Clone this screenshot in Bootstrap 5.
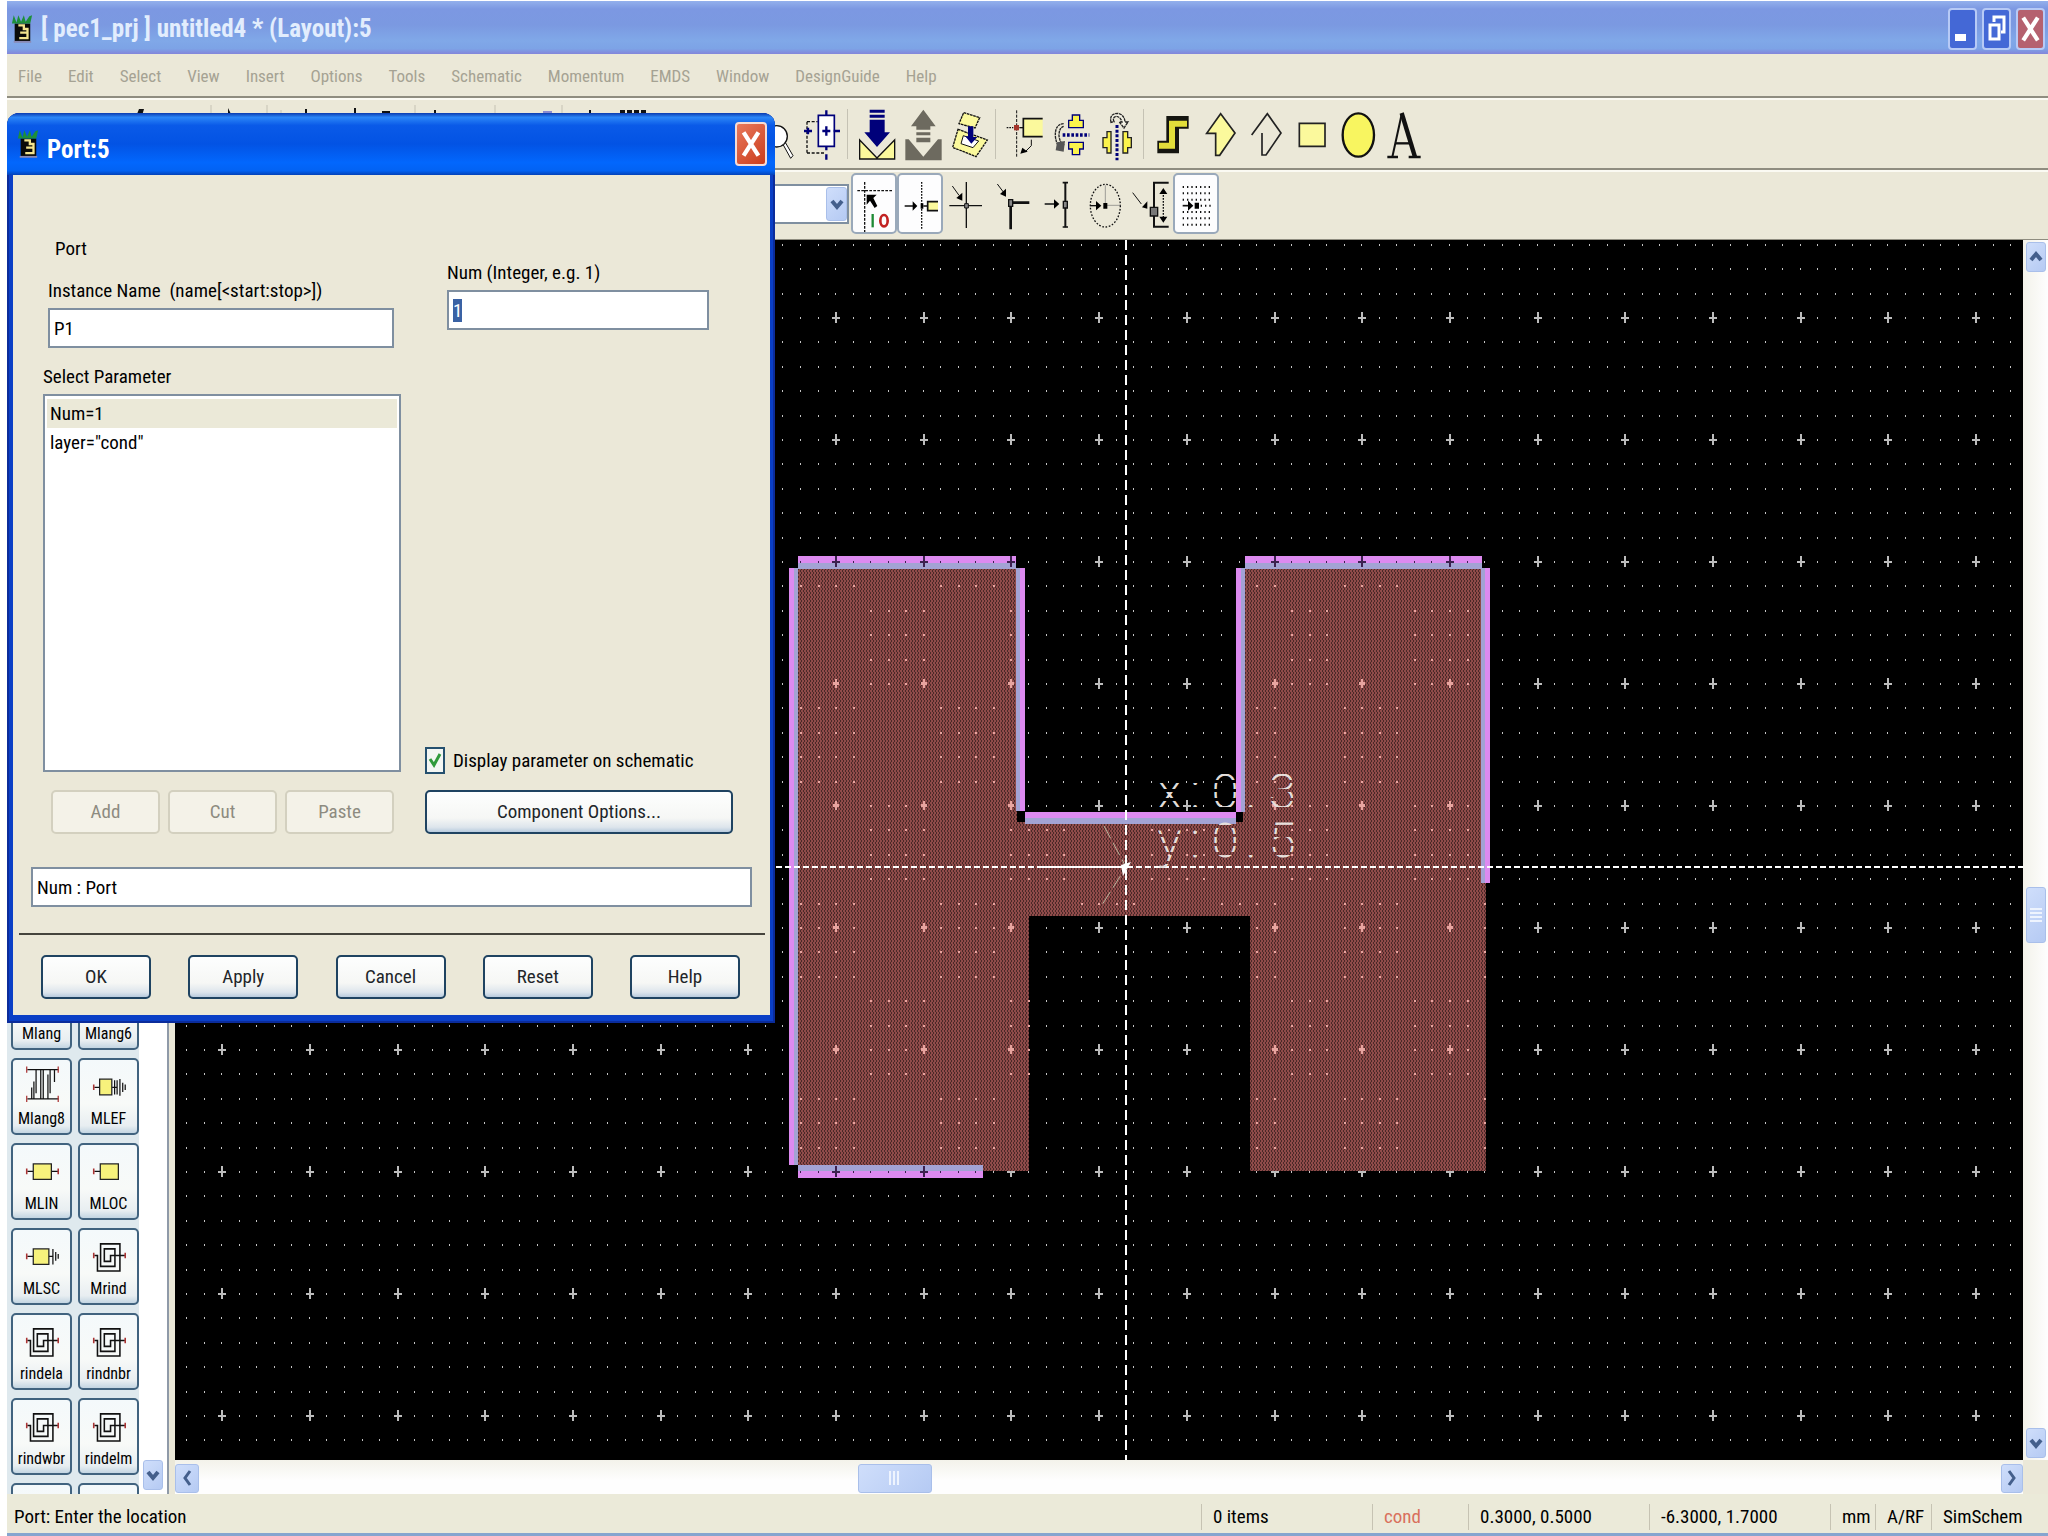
<!DOCTYPE html>
<html lang="en">
<head>
<meta charset="utf-8">
<meta name="viewport" content="width=device-width, initial-scale=1">
<title>[ pec1_prj ] untitled4 * (Layout):5</title>
<link href="https://cdn.jsdelivr.net/npm/bootstrap@5.3.0/dist/css/bootstrap.min.css" rel="stylesheet">
<style>
  :root { --face: #ebe8d8; --line: #8f8d80; --ink: #000; --field: #7f8fa0; }
  body { font-family: "Roboto Condensed", Roboto, "Liberation Sans", sans-serif; font-size: 19px; line-height: 26px; color: var(--ink); background: #fff; }
  .app-window { padding: 1px 0 0 7px; }
  .btn { --bs-btn-font-size: 19px; --bs-btn-line-height: 26px; --bs-btn-padding-x: 0; --bs-btn-padding-y: 0; }
  .app-title { height: 53px; padding: 2px 3px 0 4px; background: linear-gradient(#93b0ec 0, #7c98e2 15%, #7b99e1 45%, #80a8e8 75%, #7da3e6 90%, #8385da 100%); color: #e2edfd; font-size: 25px; font-weight: 700; }
  .win-btn { width: 29px; height: 42px; border: 2px solid #b7caf6; border-radius: 4px; background: #4468d6; }
  .win-btn.shut { background: #b5616f; }
  .menu-strip { height: 44px; padding: 2px 11px 0; gap: 26px; background: var(--face); border-bottom: 2px solid var(--line); font-size: 17px; }
  .menu-strip a { color: #a5a293; text-decoration: none; }
  .tool-strip { background: var(--face); border-top: 2px solid #fbfaf3; }
  .strip-a { height: 72px; border-bottom: 2px solid var(--line); }
  .strip-b { height: 70px; border-bottom: 1px solid var(--line); padding: 0 0 4px 642px; }
  .tool { border: 0; border-radius: 5px; width: 46px; flex: none; }
  .strip-b .tool { height: 61px; }
  .tool.on { background: #fdfdfe; border: 2px solid #9aa9ba; }
  .tool svg { display: block; width: 100%; height: 100%; }
  .tool-sep { width: 1px; height: 50px; margin: 0 5px 0 4px; background: #c5c2b4; }
  .layer-box { width: 200px; height: 40px; margin-right: 2px; background: #fff; border: 2px solid var(--field); }
  .layer-box select { appearance: none; border: 0; background: #fff; min-width: 0; }
  .nub { background: linear-gradient(135deg, #cfdefb, #b5caf3); border: 1px solid #a9bfea; border-radius: 3px; padding: 0; display: flex; align-items: center; justify-content: center; flex: none; }
  .work { background: var(--face); }
  .palette-pane { width: 162px; background: #dfe9ee; border-right: 2px solid #8f9aa8; overflow: hidden; }
  .palette-grid { width: 132px; padding: 733px 0 0 4px; display: grid; grid-template-columns: 61px 61px; grid-auto-rows: 77px; gap: 8px 6px; flex: none; }
  .part { border: 2px solid #41637f; border-radius: 5px; background: linear-gradient(#f4f9fb, #f8faf8 60%, #e8eef1 90%, #c3d5e2); font-size: 16px; line-height: 20px; padding: 0; display: flex; flex-direction: column; align-items: center; overflow: hidden; }
  .part svg { width: 58px; height: 49px; flex: none; }
  .canvas-pane { margin-left: 6px; }
  .cad { background: #000; overflow: hidden; }
  .cad svg { display: block; width: 100%; height: 100%; }
  .v-bar { width: 25px; background: linear-gradient(90deg, #f3f2ea, #fefefe); padding: 2px; }
  .h-bar { height: 34px; background: linear-gradient(#f3f2ea, #fefefe 60%); padding: 3px 0 1px; }
  .status-strip { height: 42px; background: #ebead9; border-bottom: 3px solid #86a5cf; padding: 6px 0 0 7px; }
  .status-cell { border-left: 1px solid #c6c3b3; padding-left: 11px; white-space: nowrap; }
  /* dialog */
  .port-dialog { position: absolute; left: 7px; top: 113px; width: 768px; height: 910px; background: #0a3fc6; padding: 0 5px 8px 6px; border-radius: 12px 12px 0 0; box-shadow: inset 0 0 0 2px #0b2c9b; }
  .dialog-title { height: 62px; margin: 0 -5px 0 -6px; padding: 0 8px 0 10px; border-radius: 12px 12px 0 0; background: linear-gradient(#0a3bb0 0, #2b86f7 7%, #0a5ae8 20%, #0353e4 50%, #0267fd 80%, #0262f3 93%, #0442b8 100%); color: #fff; font-size: 25px; font-weight: 700; }
  .shut-red { width: 32px; height: 44px; border: 2px solid #f6dcd5; border-radius: 4px; background: linear-gradient(135deg, #e8795c, #cb3c1c); }
  .dialog-body { background: var(--face); padding: 61px 0 0; }
  .box { border: 2px solid var(--field); border-radius: 0; background: #fff; color: #000; font-size: 19px; line-height: 26px; padding: 0 4px; height: 40px; }
  .box:focus { box-shadow: none; border-color: var(--field); background: #fff; color: #000; }
  .box::selection { background: #3a62a4; color: #fff; }
  .param-list { height: 378px; border: 2px solid var(--field); background: #fff; padding: 3px 2px; border-radius: 0; }
  .param-list .list-group-item { border: 0; padding: 0 3px; line-height: 29px; color: #000; background: #fff; text-align: left; }
  .param-list .list-group-item.active { background: #ebe9d8; }
  .xp { border: 2px solid #1f4361; border-radius: 5px; background: linear-gradient(#fdfefe, #f6f7f5 65%, #dde5ec 88%, #b8cbde); height: 44px; }
  .xp:disabled { border-color: #d3d0bf; background: #f4f2e8; color: #8d8b80; opacity: 1; }
  .left-col { width: 358px; margin-left: 30px; }
  .right-col { width: 308px; margin-left: 24px; }
  .inst-field { margin-left: 5px; }
  .num-field { margin-left: 22px; }
  .small-row { margin-top: 18px; }
  .small-row .xp { width: 109px; }
  .foot-row .xp { width: 110px; }
  .tick { width: 20px; height: 27px; margin: 0; border: 2px solid #25506f; border-radius: 0 !important; background-color: #f3f6f3; background-size: 100% 100%; box-shadow: none; }
  .tick:checked { background-color: #f3f6f3; border-color: #25506f; background-image: url("data:image/svg+xml,%3Csvg xmlns='http://www.w3.org/2000/svg' viewBox='0 0 16 23' preserveAspectRatio='none'%3E%3Cpath d='M3 10l4 6 6-11' fill='none' stroke='%232f9a3c' stroke-width='3'/%3E%3C/svg%3E"); }
  .rule { height: 2px; background: #45443d; margin: 26px 5px 0 6px; }
  .xy { font-family: Roboto, sans-serif; font-weight: 100; font-size: 48px; fill: url(#dash); stroke: url(#dash); stroke-width: 1; }
</style>
</head>
<body>
<svg class="d-none">
  <symbol id="app-mark" viewBox="0 0 24 32"><path d="M4 10h17v20H4z" fill="#0a0a08"/><path d="M1 10L3 1l3 8 2-8 3 7 3-7 2 7 4-6 3-1-2 9z" fill="#1d8f3a"/><path d="M8 12h6v4h4v4h-6M10 20h8v6H9" fill="none" stroke="#f3e58e" stroke-width="2.500"/><path d="M3 30h19" stroke="#8a8ab5" stroke-width="2"/></symbol>
  <symbol id="cross-mark" viewBox="0 0 24 34"><path d="M5 6l14 22M19 6L5 28" stroke="#fff" stroke-width="4"/></symbol>
  <symbol id="chev-down" viewBox="0 0 16 20"><path d="M3 7l5 6 5-6" fill="none" stroke="#445f8c" stroke-width="4"/></symbol>
  <symbol id="chev-up" viewBox="0 0 16 20"><path d="M3 13l5-6 5 6" fill="none" stroke="#445f8c" stroke-width="4"/></symbol>
  <symbol id="chev-left" viewBox="0 0 16 20"><path d="M11 3l-5 7 5 7" fill="none" stroke="#445f8c" stroke-width="3"/></symbol>
  <symbol id="chev-right" viewBox="0 0 16 20"><path d="M5 3l5 7-5 7" fill="none" stroke="#445f8c" stroke-width="3"/></symbol>
  <symbol id="p-lange" viewBox="32 150 186 144"><path d="M78 174h100M78 268h100M92 268v-36M99 268v-56M106 174v76M121 174v94M129 268v-94M144 190v78M151 174v76M165 174v40" fill="none" stroke="#111" stroke-width="4"/><path d="M76 164v20M76 258v20M177 164v20M177 258v20" stroke="#a33" stroke-width="4"/></symbol>
  <symbol id="p-mlef" viewBox="32 150 186 144"><path d="M78 231h18M135 231h14M143 208v46M151 208v46M160 204v54M169 216v30M177 222v18" stroke="#111" stroke-width="4"/><path d="M95 205h39v50H95z" fill="#f7f27c" stroke="#222" stroke-width="4"/><path d="M76 222v18" stroke="#a33" stroke-width="5"/></symbol>
  <symbol id="p-mlin" viewBox="32 150 186 144"><path d="M78 228h20M155 228h22" stroke="#111" stroke-width="4"/><path d="M97 204h58v50H97z" fill="#f7f27c" stroke="#222" stroke-width="4"/><path d="M76 219v18M177 219v18" stroke="#a33" stroke-width="5"/></symbol>
  <symbol id="p-mloc" viewBox="32 150 186 144"><path d="M78 228h20" stroke="#111" stroke-width="4"/><path d="M97 204h58v50H97z" fill="#f7f27c" stroke="#222" stroke-width="4"/><path d="M76 219v18" stroke="#a33" stroke-width="5"/></symbol>
  <symbol id="p-mlsc" viewBox="32 150 186 144"><path d="M78 228h20M145 228h15M160 204v50M169 214v28M177 220v16" stroke="#111" stroke-width="4"/><path d="M97 204h50v50H97z" fill="#f7f27c" stroke="#222" stroke-width="4"/><path d="M76 219v18" stroke="#a33" stroke-width="5"/></symbol>
  <symbol id="p-spiral" viewBox="32 150 186 144"><path d="M78 225h10v50h72v-87H98v72h46v-56h-34v40h20v-19h46" fill="none" stroke="#111" stroke-width="5"/><path d="M76 216v18M177 216v18" stroke="#a33" stroke-width="5"/></symbol>
</svg>

<div class="app-window vh-100 d-flex flex-column position-relative overflow-hidden">
  <header class="app-title d-flex align-items-center gap-2 flex-shrink-0">
    <svg width="22" height="30"><use href="#app-mark"/></svg>
    <span class="flex-grow-1">[ pec1_prj ] untitled4 * (Layout):5</span>
    <span class="d-flex" style="gap:5px">
      <button class="win-btn p-0 d-flex" aria-label="Minimize"><svg viewBox="0 0 25 38"><path d="M5 24h11v7H5z" fill="#fff"/></svg></button>
      <button class="win-btn p-0 d-flex" aria-label="Restore"><svg viewBox="0 0 25 38"><path d="M6 15h9v14H6z M10 12V7h10v15h-3" fill="none" stroke="#fff" stroke-width="3"/></svg></button>
      <button class="win-btn shut p-0 d-flex" aria-label="Close"><svg width="25" height="38"><use href="#cross-mark"/></svg></button>
    </span>
  </header>

  <nav class="menu-strip d-flex align-items-center flex-shrink-0">
    <a href="#">File</a><a href="#">Edit</a><a href="#">Select</a><a href="#">View</a><a href="#">Insert</a><a href="#">Options</a><a href="#">Tools</a><a href="#">Schematic</a><a href="#">Momentum</a><a href="#">EMDS</a><a href="#">Window</a><a href="#">DesignGuide</a><a href="#">Help</a>
  </nav>

  <div class="tool-strip strip-a d-flex align-items-center flex-shrink-0">
    <svg class="flex-shrink-0" width="744" height="68" viewBox="7 100 744 68"><path d="M139 109h5l-3 10h-6zM228 108l7 14h-7zM305 109h2v9h-2zM354 108h2v9h-2zM382 111h8v8h-8zM434 110h2v9h-2zM589 110h2v9h-2zM620 110h5v6h-5zM627 110h5v6h-5zM634 110h5v6h-5zM641 110h5v6h-5z" fill="#111"/><path d="M543 111h9v6h-9z" fill="#8b8bd0"/><path d="M211 105v50M267 105v50M281 110v40M415 105v50M495 105v50M562 105v50" stroke="#c5c2b4"/></svg>
    <button class="btn tool" aria-label="Zoom"><svg viewBox="-57 -3 138 207"><circle cx="20" cy="106" r="32" fill="#fff" stroke="#111" stroke-width="4"/><path d="M40 132l22 40 7-8-22-38z" fill="#fff" stroke="#111" stroke-width="3"/></svg></button>
    <button class="btn tool" aria-label="Zoom area"><svg viewBox="82 -3 138 207"><path d="M112 62h32M112 62v96M112 156h56" fill="none" stroke="#111" stroke-width="4" stroke-dasharray="9 5"/><path d="M146 43h48v93h-48z" fill="#fff" stroke="#00007a" stroke-width="5"/><path d="M103 90h24M192 90h19M158 90h24M170 76v28M170 28v14M170 136v12M170 160v16M115 80v20" stroke="#00007a" stroke-width="7"/></svg></button>
    <span class="tool-sep"></span>
    <button class="btn tool" aria-label="Push"><svg viewBox="249 -3 138 207"><path d="M269 117l52 54 53-54v57H269z" fill="#fbf99c" stroke="#111" stroke-width="4"/><path d="M299 26h45v9h-45zM299 41h45v9h-45zM299 56h45v38h16l-39 44-38-44h16z" fill="#00007a"/></svg></button>
    <button class="btn tool" aria-label="Pop"><svg viewBox="388 -3 138 207"><path d="M407 115h10l44 52 44-52h11v63H407zM461 26l37 50h-16v10h-42V76h-16zM440 94h42v9h-42zM440 110h42v14h-42z" fill="#6d6a5f"/></svg></button>
    <button class="btn tool" aria-label="Move layer"><svg viewBox="527 -3 138 207"><path d="M583 35l48 15-14 31-48-13zM566 85l88 32-34 50-70-28z" fill="#fbf99c" stroke="#111" stroke-width="4" stroke-dasharray="8 2"/><path d="M582 104l46 16-17 20-36-12z" fill="#fff" stroke="#111" stroke-width="3"/><path d="M596 76h16v32h12l-18 20-18-22h8z" fill="#00007a"/></svg></button>
    <span class="tool-sep"></span>
    <button class="btn tool" aria-label="Snap pin"><svg viewBox="695 -3 138 207"><path d="M742 28v142" stroke="#111" stroke-width="3" stroke-dasharray="9 4"/><path d="M712 80h20" stroke="#111" stroke-width="4" stroke-dasharray="5 3"/><path d="M820 53h-58v54h58" fill="#fbf99c" stroke="#111" stroke-width="5"/><path d="M750 80h12" stroke="#111" stroke-width="4"/><path d="M734 72h15v16h-15z" fill="#a5352b"/><path d="M786 116v18l-18 18" fill="none" stroke="#111" stroke-width="3"/><path d="M753 158l6-18 16 12z"/></svg></button>
    <button class="btn tool" aria-label="Mirror vertically"><svg viewBox="834 -3 138 207"><path d="M881 102h80" stroke="#00007a" stroke-width="11" stroke-dasharray="8 5"/><path d="M910 42h22v16h11v22h-44V58h11zM899 124h44v20h-11v17h-22v-17h-11z" fill="#fbf34c" stroke="#00007a" stroke-width="4"/><path d="M884 68q-26 2-25 36 2 30 22 44M884 76q-14 4-14 28 2 22 16 28" fill="none" stroke="#222" stroke-width="4" stroke-dasharray="8 2"/><path d="M864 124l24-4-4 32-24-4z" fill="#555"/></svg></button>
    <button class="btn tool" aria-label="Mirror horizontally"><svg viewBox="972 -3 138 207"><path d="M1044 72v106" stroke="#00007a" stroke-width="9" stroke-dasharray="9 5"/><path d="M1014 92h12v64h-12v-16h-12v-30h12zM1062 92h14v18h11v30h-11v16h-14z" fill="#fbf34c" stroke="#222" stroke-width="4"/><path d="M1026 64q-6-26 20-27 20 4 22 26h9l-12 18-14-18h8q-4-16-18-17-12 4-6 16z" fill="#f4f2e4" stroke="#222" stroke-width="4" stroke-dasharray="9 2"/></svg></button>
    <span class="tool-sep"></span>
    <button class="btn tool" aria-label="Trace"><svg viewBox="29 -3 138 207"><path d="M54 138h46V64h48" fill="none" stroke="#151510" stroke-width="38"/><path d="M59 134h39V68h45" fill="none" stroke="#e2de3a" stroke-width="18"/></svg></button>
    <button class="btn tool" aria-label="Polygon"><svg viewBox="167 -3 138 207"><path d="M244 38l43 58-46 67h-12V97h-27z" fill="#fbf99c" stroke="#222" stroke-width="5"/></svg></button>
    <button class="btn tool" aria-label="Polyline"><svg viewBox="305 -3 138 207"><path d="M337 102l47-64 41 58-45 66h-12V96" fill="none" stroke="#222" stroke-width="5"/></svg></button>
    <button class="btn tool" aria-label="Rectangle"><svg viewBox="442 -3 138 207"><path d="M479 67h77v69h-77z" fill="#fbf99c" stroke="#222" stroke-width="5"/></svg></button>
    <button class="btn tool" aria-label="Circle"><svg viewBox="580 -3 138 207"><ellipse cx="656" cy="102" rx="47" ry="65" fill="#f8f560" stroke="#111" stroke-width="7"/></svg></button>
    <button class="btn tool" aria-label="Text"><svg viewBox="717 -3 138 207"><path d="M742 168h32M806 168h36" stroke="#111" stroke-width="7"/><path d="M757 168l28-128" stroke="#111" stroke-width="6" fill="none"/><path d="M785 36l40 132" stroke="#111" stroke-width="13"/><path d="M766 127h46" stroke="#111" stroke-width="7"/></svg></button>
  </div>

  <div class="tool-strip strip-b d-flex align-items-center flex-shrink-0">
    <div class="layer-box d-flex align-items-center flex-shrink-0"><select class="flex-grow-1" aria-label="Layer"><option></option></select><span class="nub" style="width:21px;height:34px"><svg width="16" height="22"><use href="#chev-down"/></svg></span></div>
    <button class="btn tool on" aria-label="Enable snap"><svg viewBox="249 225 126 171"><path d="M284 246v150M262 272h106" stroke="#111" stroke-width="4" stroke-dasharray="8 4"/><path d="M290 284h30l-10 10 12 24-8 6-14-22-10 12z"/><path d="M308 342v40" stroke="#1d8a35" stroke-width="7"/><ellipse cx="342" cy="362" rx="11" ry="17" fill="none" stroke="#c22222" stroke-width="8"/></svg></button>
    <button class="btn tool on" aria-label="Pin snap"><svg viewBox="387 225 126 171"><path d="M455 246v144" stroke="#111" stroke-width="4" stroke-dasharray="5 4"/><path d="M404 318h28M460 318h12" stroke="#111" stroke-width="4"/><path d="M428 304l14 14-14 14zM452 310h8v16h-8z"/><path d="M504 305h-31v27h31" fill="#fbf99c" stroke="#111" stroke-width="5"/></svg></button>
    <button class="btn tool" aria-label="Intersection snap"><svg viewBox="519 219 138 183"><path d="M589 246v138M538 317h98" stroke="#111" stroke-width="4"/><path d="M547 258l20 28" stroke="#111" stroke-width="3"/><path d="M577 302v-24l-18 16z"/><path d="M584 311h11v13h-11z" fill="#888" stroke="#111" stroke-width="3"/></svg></button>
    <button class="btn tool" aria-label="Vertex snap"><svg viewBox="657 219 138 183"><path d="M722 310v78M722 308h56" stroke="#111" stroke-width="8"/><path d="M682 252l18 24" stroke="#111" stroke-width="3"/><path d="M708 290v-24l-18 16z"/><path d="M716 299h12v20h-12z" fill="#888" stroke="#111" stroke-width="4"/></svg></button>
    <button class="btn tool" aria-label="Midpoint snap"><svg viewBox="795 219 138 183"><path d="M886 248v134" stroke="#111" stroke-width="6"/><path d="M878 248h16M878 381h16M824 312h30" stroke="#111" stroke-width="5"/><path d="M852 298l16 14-16 14z"/><path d="M880 304h12v20h-12z" fill="#888" stroke="#111" stroke-width="4"/></svg></button>
    <button class="btn tool" aria-label="Circle centre snap"><svg viewBox="933 219 138 183"><ellipse cx="1006" cy="317" rx="45" ry="64" fill="none" stroke="#111" stroke-width="4" stroke-dasharray="5 5"/><path d="M1006 256v60h46" fill="none" stroke="#777" stroke-width="2"/><path d="M960 317h20" stroke="#111" stroke-width="4"/><path d="M978 303l16 14-16 14zM1000 309h12v17h-12z"/></svg></button>
    <button class="btn tool" aria-label="Edge snap"><svg viewBox="-39 219 138 183"><path d="M86 248H42v132h44" fill="none" stroke="#111" stroke-width="6"/><path d="M70 276v80" stroke="#111" stroke-width="4" stroke-dasharray="5 4"/><path d="M58 282l12-18 12 18zM58 350l12 18 12-18z"/><path d="M-22 278l26 34" stroke="#111" stroke-width="3"/><path d="M22 326v-22L6 322z"/><path d="M31 322h22v26H31z" fill="#777" stroke="#111" stroke-width="4"/></svg></button>
    <button class="btn tool on" aria-label="Grid snap"><svg viewBox="109 225 126 171"><path d="M132 261h88M132 280h88M132 299h88M132 336h88M132 355h88M132 374h88" stroke="#111" stroke-width="6" stroke-dasharray="4 9"/><path d="M186 317h34" stroke="#111" stroke-width="6" stroke-dasharray="4 9"/><path d="M132 317h20" stroke="#111" stroke-width="5"/><path d="M148 302l16 15-16 15zM168 308h13v18h-13z"/></svg></button>
  </div>

  <div class="work d-flex flex-grow-1" style="min-height:0">
    <aside class="palette-pane d-flex flex-shrink-0">
      <div class="palette-grid" id="parts"></div>
      <div class="flex-grow-1 bg-white d-flex flex-column justify-content-end align-items-center pb-1">
        <button class="nub" style="width:20px;height:30px" aria-label="Scroll palette down"><svg width="16" height="22"><use href="#chev-down"/></svg></button>
      </div>
    </aside>
    <main class="canvas-pane flex-grow-1 d-flex flex-column" style="min-width:0">
      <div class="d-flex flex-grow-1" style="min-height:0">
        <div class="cad flex-grow-1" style="min-width:0">
          <svg>
            <defs>
              <pattern id="dither" width="3" height="4" patternUnits="userSpaceOnUse"><path d="M0 0h3v4H0z" fill="#8f4b4a"/><path d="M0 0h1v2H0zM2 2h1v2H2z" fill="#4a2827"/></pattern>
              <pattern id="dash" width="9" height="9" patternUnits="userSpaceOnUse"><path d="M0 0h9v6H0z" fill="#e6e0dc"/></pattern>
            </defs>
            <g transform="translate(-175 -240)">
              <path id="gridDots" fill="#c4c4c4"/>
              <path id="gridPlus" fill="#bcbcbc"/>
              <path d="M798 569h219v253h226V569h243v602h-236V916h-221v255H798z" fill="url(#dither)"/>
              <path id="metalDots" fill="#e8a5a0"/>
              <g fill="#dd8af0"><path d="M798 556h218v7H798zM789 568h5v597h-5zM1020 568h5v243h-5zM1025 812h211v6h-211zM1236 568h5v244h-5zM1245 556h237v7h-237zM1485 568h5v315h-5zM798 1171h185v7H798z"/></g>
              <g fill="#a3a3d4"><path d="M798 563h218v6H798zM794 568h4v597h-4zM1016 568h4v243h-4zM1025 818h211v6h-211zM1241 568h4v244h-4zM1245 563h237v6h-237zM1481 568h4v315h-4zM798 1165h185v6H798z"/></g>
              <path id="edgeMarks" fill="#3d2050"/>
              <path d="M1126 240v1220" stroke="#fff" stroke-width="2" stroke-dasharray="10 5"/>
              <path d="M776 867h1250" stroke="#fff" stroke-width="2" stroke-dasharray="6 3"/>
              <path d="M1040 867h86" stroke="#fff" stroke-width="2"/>
              <path d="M1104 826l22 41-24 38" fill="none" stroke="#b9b49c" stroke-dasharray="14 5"/>
              <path d="M1121 865l10-3-8 14z" fill="#fff"/>
              <text class="xy" x="1158 1191 1212 1246 1269" y="808">x:0.3</text>
              <text class="xy" x="1158 1191 1212 1246 1269" y="857">y:0.5</text>
            </g>
          </svg>
        </div>
        <div class="v-bar d-flex flex-column align-items-center flex-shrink-0">
          <button class="nub" style="width:20px;height:30px" aria-label="Scroll up"><svg width="16" height="22"><use href="#chev-up"/></svg></button>
          <span style="flex:615"></span>
          <span class="nub" style="width:20px;height:56px"><svg width="12" height="16"><path d="M0 2h12M0 6h12M0 10h12M0 14h12" stroke="#eef4fe" stroke-width="2"/></svg></span>
          <span style="flex:485"></span>
          <button class="nub" style="width:20px;height:30px" aria-label="Scroll down"><svg width="16" height="22"><use href="#chev-down"/></svg></button>
        </div>
      </div>
      <div class="d-flex flex-shrink-0">
        <div class="h-bar d-flex align-items-center flex-grow-1">
          <button class="nub" style="width:24px;height:29px" aria-label="Scroll left"><svg width="16" height="20"><use href="#chev-left"/></svg></button>
          <span style="flex:659"></span>
          <span class="nub" style="width:74px;height:29px"><svg width="14" height="14"><path d="M2 0v14M6 0v14M10 0v14" stroke="#eef4fe" stroke-width="2"/></svg></span>
          <span style="flex:1068"></span>
          <button class="nub" style="width:22px;height:29px" aria-label="Scroll right"><svg width="16" height="20"><use href="#chev-right"/></svg></button>
        </div>
        <div style="width:25px"></div>
      </div>
    </main>
  </div>

  <footer class="status-strip d-flex align-items-center flex-shrink-0">
    <span class="flex-grow-1">Port: Enter the location</span>
    <span class="status-cell" style="width:171px">0 items</span>
    <span class="status-cell" style="width:96px;color:#d9705c">cond</span>
    <span class="status-cell" style="width:181px">0.3000, 0.5000</span>
    <span class="status-cell" style="width:181px">-6.3000, 1.7000</span>
    <span class="status-cell" style="width:45px">mm</span>
    <span class="status-cell" style="width:56px">A/RF</span>
    <span class="status-cell" style="width:117px">SimSchem</span>
  </footer>

  <section class="port-dialog d-flex flex-column" role="dialog" aria-label="Port:5">
    <div class="dialog-title d-flex align-items-center gap-2 flex-shrink-0">
      <svg width="22" height="30"><use href="#app-mark"/></svg>
      <span class="flex-grow-1" style="padding-top:11px">Port:5</span>
      <button class="shut-red p-0" aria-label="Close dialog"><svg width="26" height="36"><use href="#cross-mark"/></svg></button>
    </div>
    <form class="dialog-body flex-grow-1" onsubmit="return false">
      <div class="d-flex">
        <div class="left-col">
          <div class="ps-2 ms-1">Port</div>
          <label for="inst" class="d-block mt-3 inst-field">Instance Name&nbsp; (name[&lt;start:stop&gt;])</label>
          <input id="inst" class="form-control box mt-1 inst-field" style="width:346px" value="P1">
          <div class="mt-3 pb-1" id="plabel">Select Parameter</div>
          <div class="list-group param-list" role="listbox" aria-labelledby="plabel">
            <button type="button" class="list-group-item active" role="option">Num=1</button>
            <button type="button" class="list-group-item" role="option">layer="cond"</button>
          </div>
          <div class="small-row d-flex gap-2 ms-2">
            <button class="btn xp" disabled>Add</button><button class="btn xp" disabled>Cut</button><button class="btn xp" disabled>Paste</button>
          </div>
        </div>
        <div class="right-col d-flex flex-column">
          <label for="num" class="mt-4 num-field">Num (Integer, e.g. 1)</label>
          <input id="num" class="form-control box mt-1 num-field" style="width:262px" value="1">
          <div class="mt-auto d-flex align-items-center gap-2 mb-3">
            <input id="disp" type="checkbox" class="form-check-input tick" checked><label for="disp">Display parameter on schematic</label>
          </div>
          <button class="btn xp">Component Options...</button>
        </div>
      </div>
      <input class="form-control box" style="width:721px;margin:33px 0 0 18px" value="Num : Port" aria-label="Parameter description" readonly>
      <div class="rule"></div>
      <div class="foot-row d-flex justify-content-between" style="padding:20px 30px 0 28px">
        <button class="btn xp">OK</button><button class="btn xp">Apply</button><button class="btn xp">Cancel</button><button class="btn xp">Reset</button><button class="btn xp">Help</button>
      </div>
    </form>
  </section>
</div>

<script src="https://cdn.jsdelivr.net/npm/bootstrap@5.3.0/dist/js/bootstrap.bundle.min.js"></script>
<script>
  // component palette
  const parts = [['Mlang','lange'],['Mlang6','lange'],['Mlang8','lange'],['MLEF','mlef'],['MLIN','mlin'],['MLOC','mloc'],['MLSC','mlsc'],['Mrind','spiral'],['rindela','spiral'],['rindnbr','spiral'],['rindwbr','spiral'],['rindelm','spiral'],['',''],['','']];
  document.getElementById('parts').innerHTML = parts.map(([n, i]) =>
    `<button class="part"${n ? '' : ' aria-label="More parts"'}><svg>${i ? `<use href="#p-${i}"/>` : ''}</svg><span>${n}</span></button>`).join('');

  // snap grid: a plus sign on every fifth dot
  const inMetal = (x, y) => y > 569 && y < 1171 && x > 798 && x < 1486 &&
    !(x > 1016 && x < 1243 && y < 823) && !(x > 1029 && x < 1250 && y > 916);
  const onEdge = (x, y) => (y > 555 && y < 570 && (x > 798 && x < 1016 || x > 1245 && x < 1482)) || (y > 1164 && y < 1179 && x > 798 && x < 983);
  let dots = '', plus = '', metal = '', edge = '';
  for (let r = -15; r <= 36; r++) for (let c = -36; c <= 70; c++) {
    const x = Math.round(800 + c * 17.54), y = Math.round(561 + r * 24.4);
    const big = (c - 2) % 5 === 0 && r % 5 === 0;
    if (y > 1450 || x > 2020) continue;
    const dot = `M${x} ${y}h1v2h-1z`, cross = `M${x - 3} ${y}h8v2h-8zM${x} ${y - 5}h2v11h-2z`;
    if (onEdge(x, y)) edge += big ? cross : dot;
    else if (inMetal(x, y)) {
      const odd = (Math.floor((r + 2) / 4) + Math.floor(c / 3.875)) % 2;
      if (big) metal += `M${x - 2} ${y - 1}h6v3h-6zM${x} ${y - 4}h2v9h-2z`;
      else if (!odd) metal += `M${x} ${y}h2v2h-2z`;
    } else if (big) plus += cross;
    else dots += dot;
  }
  gridDots.setAttribute('d', dots); gridPlus.setAttribute('d', plus);
  metalDots.setAttribute('d', metal); edgeMarks.setAttribute('d', edge);
  const num = document.getElementById('num'); num.focus(); num.select();
</script>
</body>
</html>
